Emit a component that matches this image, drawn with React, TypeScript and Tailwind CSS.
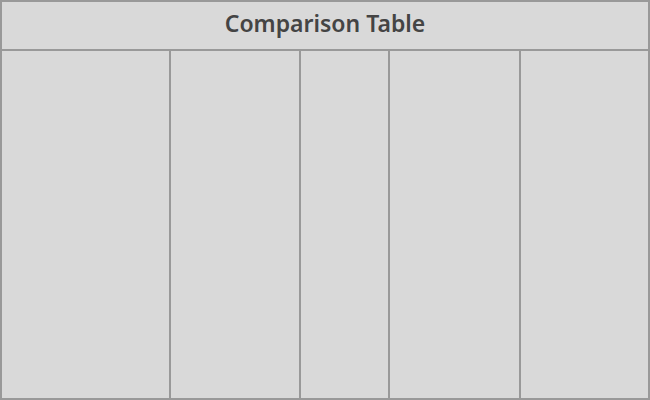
import React from "react";

export default function App() {
  const cols = ["w-[169px]", "w-[130px]", "w-[89px]", "w-[131px]", "flex-1"];
  return (
    <div className="w-[650px] h-[400px] bg-[#d9d9d9] border-2 border-[#999999] flex flex-col" style={{ fontFamily: '"Noto Sans", "Open Sans", sans-serif' }}>
      <div className="h-[49px] border-b-2 border-[#999999] flex items-center justify-center pb-[5px]">
        <span className="text-[23px] font-semibold text-[#444444] leading-none">Comparison Table</span>
      </div>
      <div className="flex-1 flex">
        {cols.map((c, i) => (
          <div key={i} className={`${c} h-full ${i < cols.length - 1 ? "border-r-2 border-[#999999]" : ""}`} />
        ))}
      </div>
    </div>
  );
}
